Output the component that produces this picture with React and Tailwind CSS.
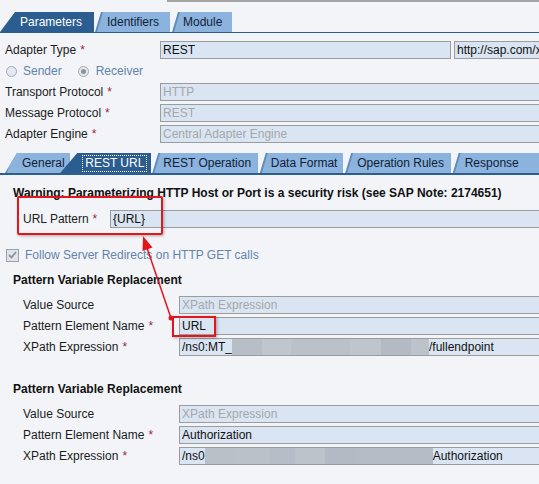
function Req() {
  return <span className="ml-[4px] text-[#a3243b]">*</span>;
}

function InTab({ className, textClass, children }) {
  return (
    <div className={`h-[20px] bg-[#5f8bbb] [clip-path:polygon(6px_0,100%_0,100%_100%,0_100%)] ${className}`}>
      <div className={`h-full bg-[#8cb3dd] leading-[20px] text-[#0f2238] [clip-path:polygon(8px_0,100%_0,100%_100%,2px_100%)] ${textClass}`}>
        {children}
      </div>
    </div>
  );
}

function Field({ disabled, className = "", children }) {
  return (
    <div
      className={`flex h-[18px] items-center overflow-hidden border border-[#9c9c9c] bg-[#d9e5f3] pl-[2px] leading-[16px] whitespace-nowrap ${
        disabled ? "text-[#a7a7a7]" : "text-[#111]"
      } ${className}`}
    >
      {children}
    </div>
  );
}

function Row({ label, req, labelClass, children, className = "" }) {
  return (
    <div className={`flex h-[18px] items-center ${className}`}>
      <div className={`shrink-0 whitespace-nowrap ${labelClass}`}>
        {label}
        {req && <Req />}
      </div>
      {children}
    </div>
  );
}

function Blur({ blocks }) {
  return (
    <div className="flex h-full self-stretch">
      {blocks.map(([w, c], i) => (
        <div key={i} className="h-full" style={{ width: w, background: c }} />
      ))}
    </div>
  );
}

function PatternBlock({ name, before, blocks, after, className }) {
  return (
    <div className={className}>
      <div className="pl-[13px] font-bold leading-[14px] text-[#111]">Pattern Variable Replacement</div>
      <div className="mt-[9px] flex flex-col gap-[3px]">
        <Row label="Value Source" labelClass="w-[179px] pl-[23px]">
          <Field disabled className="mr-[-2px] flex-1">XPath Expression</Field>
        </Row>
        <Row label="Pattern Element Name" req labelClass="w-[179px] pl-[23px]">
          <Field className="mr-[-2px] flex-1">{name}</Field>
        </Row>
        <Row label="XPath Expression" req labelClass="w-[179px] pl-[23px]">
          <Field className="mr-[-2px] flex-1">
            <span>{before}</span>
            <Blur blocks={blocks} />
            <span>{after}</span>
          </Field>
        </Row>
      </div>
    </div>
  );
}

export default function App() {
  return (
    <div className="relative h-[484px] w-[539px] overflow-hidden bg-[#f2f4f8] font-['Liberation_Sans',Arial,sans-serif] text-[12px] text-[#1c1c1c]">
      <div className="ml-[167px] h-[2px] bg-[#a4a4a4]" />

      <div className="mt-[10px] flex h-[21px] items-end border-b border-[#2b5f92]">
        <div className="h-[20px] w-[94px] bg-[#2b5d90] pl-[20px] leading-[20px] text-white [clip-path:polygon(15px_0,100%_0,100%_100%,0_100%)]">
          Parameters
        </div>
        <InTab className="ml-[1px] w-[75px]" textClass="pl-[12px]">Identifiers</InTab>
        <InTab className="ml-[2px] w-[60px]" textClass="pl-[11px]">Module</InTab>
      </div>

      <div className="mt-[8px] flex flex-col">
        <Row label="Adapter Type" req labelClass="w-[160px] pl-[5px]">
          <Field className="w-[291px]">REST</Field>
          <Field className="ml-[3px] mr-[-2px] flex-1">http://sap.com/x</Field>
        </Row>
        <div className="flex h-[24px] items-center pl-[6px] text-[#6384ad]">
          <span className="h-[11px] w-[11px] rounded-full border border-[#a3abb4] bg-[#e4e9ef]" />
          <span className="ml-[6px]">Sender</span>
          <span className="ml-[16px] flex h-[11px] w-[11px] items-center justify-center rounded-full border border-[#a3abb4] bg-[#e4e9ef]">
            <span className="h-[5px] w-[5px] rounded-full bg-[#8d949c]" />
          </span>
          <span className="ml-[7px]">Receiver</span>
        </div>
        <div className="flex flex-col gap-[3px]">
          <Row label="Transport Protocol" req labelClass="w-[160px] pl-[5px]">
            <Field disabled className="mr-[-2px] flex-1">HTTP</Field>
          </Row>
          <Row label="Message Protocol" req labelClass="w-[160px] pl-[5px]">
            <Field disabled className="mr-[-2px] flex-1">REST</Field>
          </Row>
          <Row label="Adapter Engine" req labelClass="w-[160px] pl-[5px]">
            <Field disabled className="mr-[-2px] flex-1">Central Adapter Engine</Field>
          </Row>
        </div>
      </div>

      <div className="mt-[10px] flex h-[22px] items-end border-b-2 border-[#2b5f92]">
        <InTab className="ml-[5px] w-[68px] [clip-path:polygon(12px_0,100%_0,100%_100%,0_100%)]" textClass="pl-[17px]">
          General
        </InTab>
        <div className="relative z-10 ml-[-10px] flex h-[20px] w-[94px] items-center bg-[#2b5d90] pl-[22px] text-white [clip-path:polygon(17px_0,100%_0,100%_100%,0_100%)]">
          <span className="border border-dotted border-white px-[2px] leading-[15px]">REST URL</span>
        </div>
        <InTab className="ml-[1px] w-[110px]" textClass="pl-[11px]">REST Operation</InTab>
        <InTab className="ml-[2px] w-[87px]" textClass="pl-[11px]">Data Format</InTab>
        <InTab className="ml-[2px] w-[110px]" textClass="pl-[12px]">Operation Rules</InTab>
        <InTab className="ml-[2px] w-[90px]" textClass="pl-[12px]">Response</InTab>
      </div>

      <div className="mt-[11px] pl-[13px] font-bold leading-[14px] text-[#111]">
        Warning: Parameterizing HTTP Host or Port is a security risk (see SAP Note: 2174651)
      </div>

      <Row label="URL Pattern" req labelClass="w-[110px] pl-[23px]" className="mt-[10px]">
        <Field className="mr-[-2px] flex-1">{"{URL}"}</Field>
      </Row>

      <div className="mt-[20px] flex h-[14px] items-center pl-[6px] text-[#6384ad]">
        <span className="flex h-[13px] w-[13px] items-center justify-center border border-[#9aa1a8] bg-[#dfe4ea]">
          <svg width="9" height="8" viewBox="0 0 9 8">
            <path d="M1 4 L3.5 6.5 L8 1" fill="none" stroke="#8d949c" strokeWidth="1.8" />
          </svg>
        </span>
        <span className="ml-[6px]">Follow Server Redirects on HTTP GET calls</span>
      </div>

      <PatternBlock
        className="mt-[11px]"
        name="URL"
        before="/ns0:MT_"
        blocks={[
          [30, "#b7bec7"],
          [29, "#bfc6ce"],
          [59, "#bac1c9"],
          [31, "#bec5cd"],
          [30, "#b3bac4"],
          [18, "#bcc3cb"],
        ]}
        after="/fullendpoint"
      />

      <PatternBlock
        className="mt-[26px]"
        name="Authorization"
        before="/ns0"
        blocks={[
          [30, "#b9c0c8"],
          [35, "#bac1c9"],
          [25, "#b6bdc6"],
          [30, "#bcc3cb"],
          [30, "#b3bac3"],
          [78, "#b4bbc4"],
        ]}
        after="Authorization"
      />

      {/* annotations */}
      <div className="pointer-events-none absolute left-[17px] top-[196px] h-[39px] w-[146px] rounded-[2px] border-2 border-[#e3161c] shadow-[1px_1px_3px_rgba(0,0,0,0.3)]" />
      <div className="pointer-events-none absolute left-[172px] top-[316px] h-[21px] w-[44px] border-2 border-[#e3161c] shadow-[1px_1px_3px_rgba(0,0,0,0.3)]" />
      <svg className="pointer-events-none absolute left-0 top-0" width="539" height="484" viewBox="0 0 539 484">
        <line x1="171" y1="318" x2="147" y2="248" stroke="#e3161c" strokeWidth="1.5" />
        <polygon points="143,236 152.5,247.5 142.5,251" fill="#e3161c" />
        <circle cx="171" cy="318" r="2.5" fill="#e3161c" />
      </svg>
    </div>
  );
}
